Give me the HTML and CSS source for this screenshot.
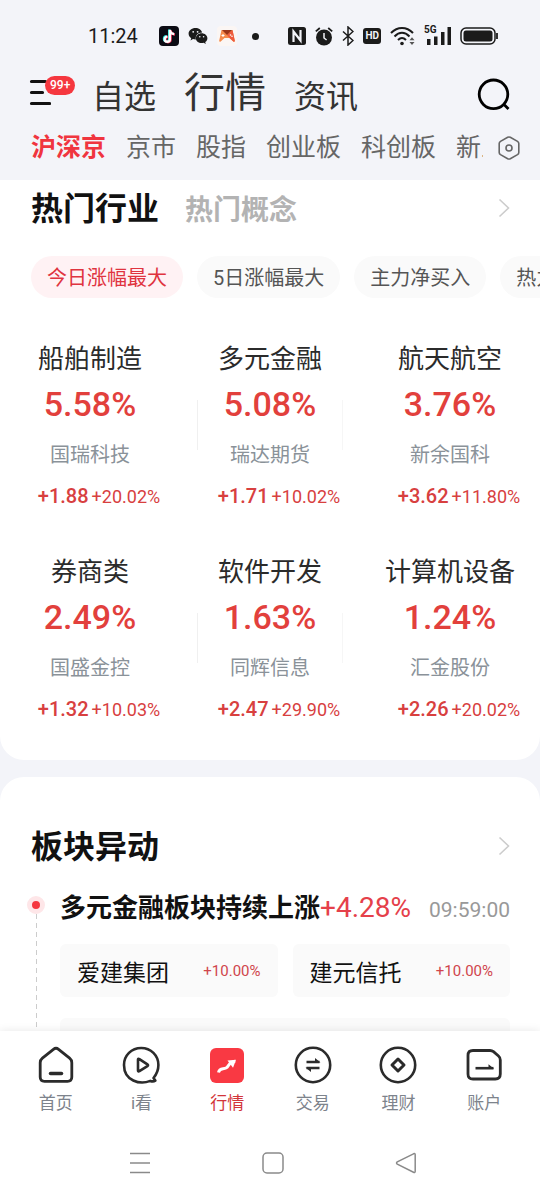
FILE: index.html
```html
<!DOCTYPE html>
<html lang="zh-CN">
<head>
    <meta charset="UTF-8">
    <meta name="viewport" content="width=device-width, initial-scale=1.0">
    <title>行情</title>
    <link rel="stylesheet" href="styles.css">
</head>
<body>
    <div class="status-bar">
        <span class="clock">11:24</span>
        <div class="status-apps">
            <svg width="20" height="20" viewBox="0 0 20 20">
                <rect width="20" height="20" rx="4" fill="#0b0b14"/>
                <g fill="none" stroke-width="2.4">
                    <path d="M10.2 3.4v9.4a2.6 2.6 0 1 1-2.6-2.6M10.2 4c.4 2.200 2 3.600 4.300 3.700" stroke="#25e5e0"/>
                    <path d="M11.600 4.200v9.400a2.600 2.600 0 1 1-2.600-2.600M11.600 4.800c.4 2.200 2 3.600 4.300 3.700" stroke="#fb2c55"/>
                    <path d="M10.900 3.800v9.400a2.600 2.600 0 1 1-2.600-2.600M10.900 4.400c.4 2.200 2 3.600 4.300 3.700" stroke="#fff"/>
                </g>
            </svg>
            <svg width="20" height="18" viewBox="0 0 20 18">
                <path d="M7.500 1C3.600 1 .6 3.500.6 6.700c0 1.900 1 3.400 2.600 4.500l-.7 2.200 2.500-1.300c.8.2 1.600.3 2.500.3h.4c-.9-3.700 2-6.900 6.200-6.900C13.500 2.900 10.800 1 7.500 1z" fill="#1b1b1b"/>
                <path d="M13.600 6.300c-3.300 0-5.700 2.200-5.700 4.900s2.400 4.900 5.700 4.900c.7 0 1.400-.1 2-.3l2.200 1.200-.6-1.900c1.300-.9 2.200-2.300 2.200-3.900 0-2.700-2.600-4.900-5.800-4.900z" fill="#1b1b1b"/>
                <g fill="#f3f4f9"><circle cx="5.200" cy="4.800" r=".9"/><circle cx="9.600" cy="4.800" r=".9"/><circle cx="11.800" cy="9.800" r=".8"/><circle cx="15.600" cy="9.800" r=".8"/></g>
            </svg>
            <svg width="20" height="20" viewBox="0 0 20 20">
                <rect width="20" height="20" rx="4" fill="#fbf6f4"/>
                <path d="M4.500 4h11l2.300 10.800c.1.900-.8 1.200-1.500.6L12.500 12h-5l-3.800 3.400c-.7.6-1.600.3-1.500-.6z" fill="#f58a4b"/>
                <path d="M10 9l5.500-5 2.300 10.800c.1.900-.8 1.200-1.500.6L12.500 12z" fill="#ee5a3c"/>
                <path d="M5 4h10l-5 5z" fill="#9c3418"/>
                <path d="M4.500 9.500h3M6 8v3" stroke="#fff"/>
                <circle cx="13.500" cy="9" r=".8" fill="#fff"/><circle cx="15" cy="10.300" r=".8" fill="#fff"/>
            </svg>
            <span class="dot"></span>
        </div>
        <div class="status-system">
            <svg width="18" height="18" viewBox="0 0 18 18">
                <rect width="18" height="18" rx="2.500" fill="#1b1b1b"/>
                <path d="M5.500 15V4.500l7 9V3" fill="none" stroke="#f3f4f9" stroke-width="2.200"/>
            </svg>
            <svg width="18" height="19" viewBox="0 0 18 19">
                <circle cx="9" cy="10.500" r="8" fill="#1b1b1b"/>
                <path d="M.8 4.400L4.800 1M17.200 4.400L13.200 1" stroke="#1b1b1b" stroke-width="1.800"/>
                <path d="M9 6v5l2.600 2" fill="none" stroke="#f3f4f9" stroke-width="1.500"/>
            </svg>
            <svg width="12" height="20" viewBox="0 0 12 20">
                <path d="M1 5.500l10 9L6 19V1l5 4.500-10 9" fill="none" stroke="#1b1b1b" stroke-width="1.500"/>
            </svg>
            <span class="hd">HD</span>
            <svg width="25" height="20" viewBox="0 0 25 20">
                <g fill="none" stroke="#1b1b1b" stroke-width="2">
                    <path d="M1 7C7.500.2 16.500.2 23 7"/>
                    <path d="M4.500 10.500c4.800-5 10.200-5 15 0"/>
                    <path d="M8 14c2.800-2.800 5.200-2.800 8 0"/>
                </g>
                <circle cx="12" cy="17.500" r="1.800" fill="#1b1b1b"/>
                <path d="M19.500 14.200l2.500-3 2.500 3zM19.500 16l2.500 3 2.500-3z" fill="#555"/>
            </svg>
            <div class="signal">
                <span class="signal-label">5G</span>
                <svg width="27" height="20" viewBox="0 0 27 20">
                    <path d="M3 13h3.500v6H3zM10 10.500h3.500V19H10zM17 6h3.500v13H17zM23.500 1H27v18h-3.500z" fill="#1b1b1b"/>
                </svg>
            </div>
            <svg width="38" height="18" viewBox="0 0 38 18">
                <rect x="1" y="1" width="34" height="16" rx="5" fill="none" stroke="#1b1b1b" stroke-width="1.500"/>
                <rect x="3.500" y="3.500" width="29" height="11" rx="2.500" fill="#1b1b1b"/>
                <path d="M37 6v6" stroke="#1b1b1b" stroke-width="1.800"/>
            </svg>
        </div>
    </div>

    <header class="header">
        <button class="menu-button" aria-label="菜单">
            <svg width="22" height="28" viewBox="0 0 22 28">
                <path d="M2.500 2.500h14M2.500 13.500h11M2.500 24.500h18" stroke="#111" stroke-width="3.200" stroke-linecap="round"/>
            </svg>
            <span class="badge">99+</span>
        </button>
        <nav class="main-tabs">
            <a href="#">自选</a>
            <a href="#" class="active">行情</a>
            <a href="#">资讯</a>
        </nav>
        <button class="search-button" aria-label="搜索">
            <svg width="34" height="34" viewBox="0 0 34 34">
                <path d="M16.500 2a14.300 14.300 0 1 0 0 28.600 14.300 14.300 0 0 0 0-28.600zM26.500 26l5 5" fill="none" stroke="#000" stroke-width="2.800"/>
            </svg>
        </button>
    </header>

    <div class="market-bar">
        <nav class="market-tabs">
            <a href="#" class="active">沪深京</a>
            <a href="#">京市</a>
            <a href="#">股指</a>
            <a href="#">创业板</a>
            <a href="#">科创板</a>
            <a href="#">新三板</a>
        </nav>
        <button class="settings-button" aria-label="设置">
            <svg width="24" height="26" viewBox="0 0 24 26">
                <path d="M10.700 2.300q1.300-.7 2.600 0l7.200 4.100q1.300.8 1.300 2.200v8.800q0 1.400-1.300 2.200l-7.200 4.100q-1.300.7-2.600 0l-7.200-4.100q-1.300-.8-1.300-2.200V8.600q0-1.400 1.300-2.200z" fill="none" stroke="#666" stroke-width="1.600"/>
                <circle cx="12" cy="13" r="3" fill="none" stroke="#666" stroke-width="1.600"/>
            </svg>
        </button>
    </div>

    <main class="content">
        <section class="card card-industry">
            <div class="card-head">
                <h2>热门行业</h2>
                <h2 class="muted">热门概念</h2>
                <a href="#" class="more" aria-label="更多">
                    <svg width="12" height="20" viewBox="0 0 12 20"><path d="M1.500 1.500l9 8.500-9 8.500" fill="none" stroke="#ccc" stroke-width="1.600"/></svg>
                </a>
            </div>
            <div class="chips">
                <button class="chip active">今日涨幅最大</button>
                <button class="chip">5日涨幅最大</button>
                <button class="chip">主力净买入</button>
                <button class="chip">热力值</button>
            </div>
            <div class="industries">
                <a href="#" class="industry">
                    <span class="name">船舶制造</span>
                    <span class="percent">5.58%</span>
                    <span class="stock">国瑞科技</span>
                    <span class="change">+1.88 <small>+20.02%</small></span>
                </a>
                <a href="#" class="industry divided">
                    <span class="name">多元金融</span>
                    <span class="percent">5.08%</span>
                    <span class="stock">瑞达期货</span>
                    <span class="change">+1.71 <small>+10.02%</small></span>
                </a>
                <a href="#" class="industry">
                    <span class="name">航天航空</span>
                    <span class="percent">3.76%</span>
                    <span class="stock">新余国科</span>
                    <span class="change">+3.62 <small>+11.80%</small></span>
                </a>
                <a href="#" class="industry">
                    <span class="name">券商类</span>
                    <span class="percent">2.49%</span>
                    <span class="stock">国盛金控</span>
                    <span class="change">+1.32 <small>+10.03%</small></span>
                </a>
                <a href="#" class="industry divided">
                    <span class="name">软件开发</span>
                    <span class="percent">1.63%</span>
                    <span class="stock">同辉信息</span>
                    <span class="change">+2.47 <small>+29.90%</small></span>
                </a>
                <a href="#" class="industry">
                    <span class="name">计算机设备</span>
                    <span class="percent">1.24%</span>
                    <span class="stock">汇金股份</span>
                    <span class="change">+2.26 <small>+20.02%</small></span>
                </a>
            </div>
        </section>

        <section class="card card-moves">
            <div class="card-head">
                <h2>板块异动</h2>
                <a href="#" class="more" aria-label="更多">
                    <svg width="12" height="20" viewBox="0 0 12 20"><path d="M1.500 1.500l9 8.500-9 8.500" fill="none" stroke="#ccc" stroke-width="1.600"/></svg>
                </a>
            </div>
            <div class="move">
                <div class="timeline">
                    <span class="timeline-dot"></span>
                    <span class="timeline-line"></span>
                </div>
                <div class="move-body">
                    <div class="move-head">
                        <h3>多元金融板块持续上涨</h3>
                        <span class="move-percent">+4.28%</span>
                        <time>09:59:00</time>
                    </div>
                    <div class="stocks">
                        <a href="#" class="stock-box">爱建集团 <small>+10.00%</small></a>
                        <a href="#" class="stock-box">建元信托 <small>+10.00%</small></a>
                        <div class="stock-box wide"></div>
                    </div>
                </div>
            </div>
        </section>
    </main>

    <nav class="tab-bar">
        <a href="#">
            <svg width="40" height="40" viewBox="0 0 40 40">
                <path d="M17.400 4.300q2.600-2 5.200 0l11 8.900q2.200 1.800 2.200 4.600V32q0 4.300-4.300 4.300h-23Q4.200 36.300 4.200 32V17.800q0-2.800 2.200-4.600z" fill="none" stroke="#2b2b2b" stroke-width="2.800"/>
                <path d="M14.500 28.500h11" stroke="#2b2b2b" stroke-width="3.500" stroke-linecap="round"/>
            </svg>
            首页
        </a>
        <a href="#">
            <svg width="40" height="40" viewBox="0 0 40 40" fill="none" stroke="#2b2b2b" stroke-width="2.600" stroke-linejoin="round" stroke-linecap="round">
                <path d="M32.500 33l1.800 2.600q-2 1.300-5 .3C19 40 3 36 3 20 3 10.500 10.500 3 20.200 3S37.400 10.500 37.400 20c0 5-2 9.500-4.900 13z"/>
                <path d="M17 14.500v11q0 1.500 1.400.7l8-5q1.300-.9 0-1.800l-8-5.300q-1.400-.9-1.400.4z"/>
            </svg>
            i看
        </a>
        <a href="#" class="active">
            <svg width="40" height="40" viewBox="0 0 40 40">
                <rect x="3" y="3" width="34" height="35" rx="6" fill="#f93943"/>
                <path d="M11.500 27.500c1-5 4.500-3 7.500-4.500s2-4.500 6-5.500l3-1.500" fill="none" stroke="#fff" stroke-width="3"/>
                <path d="M20.500 15.500l8.500-.7-3 8z" fill="#fff"/>
            </svg>
            行情
        </a>
        <a href="#">
            <svg width="40" height="40" viewBox="0 0 40 40" fill="none" stroke="#2b2b2b" stroke-width="2.600">
                <circle cx="20" cy="20" r="17.200"/>
                <path d="M13.500 17h13M13.500 23h13"/>
                <path d="M22 13l5.500 4.500H22zM18 27l-5.500-4.500H18z" fill="#2b2b2b" stroke="none"/>
            </svg>
            交易
        </a>
        <a href="#">
            <svg width="40" height="40" viewBox="0 0 40 40" fill="none" stroke="#2b2b2b" stroke-width="2.600">
                <circle cx="20" cy="20" r="17.200"/>
                <path d="M20 14l6 6-6 6-6-6z" stroke-width="3" stroke-linejoin="round"/>
            </svg>
            理财
        </a>
        <a href="#">
            <svg width="40" height="40" viewBox="0 0 40 40" fill="none" stroke="#2b2b2b" stroke-width="2.800">
                <path d="M9 5.500h17q2 0 3.500 1.200l5 4.300q1.800 1.500 1.800 4V29q0 5-5 5H9q-5 0-5-5V10.500q0-5 5-5z"/>
                <path d="M11.500 23.200h18" stroke-width="2.600"/>
                <path d="M24.500 19.300l5.500 4.500h-5.500z" fill="#2b2b2b" stroke="none"/>
            </svg>
            账户
        </a>
    </nav>

    <div class="system-nav">
        <button aria-label="最近任务">
            <svg width="22" height="22" viewBox="0 0 22 22"><path d="M1 1.500h20M1 11h20M1 20.500h20" stroke="#8a8a8a" stroke-width="1.500"/></svg>
        </button>
        <button aria-label="主屏幕">
            <svg width="22" height="22" viewBox="0 0 22 22"><rect x="1" y="1" width="20" height="20" rx="4" fill="none" stroke="#8a8a8a" stroke-width="1.500"/></svg>
        </button>
        <button aria-label="返回">
            <svg width="22" height="22" viewBox="0 0 22 22"><path d="M18.500 1.800q1.700-.8 1.700 1v16.400q0 1.800-1.700 1L2.300 12.200q-1.500-1.200 0-2.400z" fill="none" stroke="#8a8a8a" stroke-width="1.500"/></svg>
        </button>
    </div>
</body>
</html>
```
FILE: styles.css
```css
* {
    box-sizing: border-box;
}
body {
    font-family: Roboto, "Noto Sans CJK SC", sans-serif;
    display: flex;
    flex-direction: column;
    height: 100vh;
    margin: 0;
    overflow: hidden;
    background: #f3f4f9;
    color: #2b2b2b;
}
a {
    color: inherit;
    text-decoration: none;
}
button {
    font-family: inherit;
    padding: 0;
    border: none;
    background: none;
    color: inherit;
}
svg {
    display: block;
    flex: none;
}
h2, h3 {
    margin: 0;
}

/* status bar */
.status-bar {
    display: flex;
    align-items: center;
    height: 72px;
    padding: 0 42px 0 88px;
    color: #1b1b1b;
}
.clock {
    font-size: 20px;
}
.status-apps {
    display: flex;
    align-items: center;
    gap: 9px;
    margin-left: 21px;
}
.dot {
    width: 7px;
    height: 7px;
    margin-left: 6px;
    border-radius: 50%;
    background: #1b1b1b;
}
.status-system {
    display: flex;
    align-items: center;
    gap: 9px;
    margin-left: auto;
}
.hd {
    padding: 0 2px;
    border-radius: 3px;
    background: #1b1b1b;
    color: #f3f4f9;
    font-size: 10px;
    font-weight: bold;
    line-height: 16px;
}
.signal {
    position: relative;
}
.signal-label {
    position: absolute;
    top: -2px;
    left: 0;
    font-size: 10px;
    font-weight: bold;
    line-height: 12px;
}

/* header */
.header {
    display: flex;
    align-items: center;
    height: 46px;
    padding: 0 29px;
}
.menu-button {
    position: relative;
    width: 46px;
    margin-bottom: 4px;
}
.badge {
    position: absolute;
    top: -3px;
    left: 16px;
    padding: 0 5px;
    border-radius: 10px;
    background: #f5373f;
    color: white;
    font-size: 12px;
    font-weight: 500;
    line-height: 19px;
}
.main-tabs {
    display: flex;
    align-items: center;
    gap: 28px;
    flex: 1;
    margin-left: 17px;
    font-size: 32px;
    line-height: 44px;
    color: #333;
}
.main-tabs a {
    padding-top: 4px;
}
.main-tabs .active {
    padding: 0 0 4px;
    font-size: 41px;
}

/* market tabs */
.market-bar {
    display: flex;
    align-items: center;
    height: 62px;
    padding: 0 19px 2px 31px;
}
.market-tabs {
    display: flex;
    gap: 20px;
    flex: 1;
    margin-right: 14px;
    overflow: hidden;
    white-space: nowrap;
    font-size: 25px;
    line-height: 36px;
    color: #666;
}
.market-tabs a {
    flex: none;
}
.market-tabs .active {
    color: #f0353f;
    font-weight: bold;
}

/* cards */
.content {
    flex: 1;
    min-height: 0;
    overflow: hidden;
}
.card {
    background: white;
}
.card-industry {
    padding-bottom: 36px;
    border-radius: 0 0 24px 24px;
}
.card-moves {
    margin-top: 17px;
    padding-top: 41px;
    border-radius: 24px 24px 0 0;
}
.card-head {
    display: flex;
    align-items: baseline;
    height: 58px;
    padding: 5px 30px 0 31px;
}
h2 {
    font-size: 32px;
    line-height: 48px;
    color: #111;
}
h2.muted {
    margin-left: 26px;
    font-size: 28px;
    color: #b3b3b3;
}
.more {
    align-self: center;
    margin: 0 0 8px auto;
}

.chips {
    display: flex;
    gap: 14px;
    margin: 18px 0 40px 31px;
    overflow: hidden;
    white-space: nowrap;
}
.chip {
    flex: none;
    padding: 2px 16px 0;
    border-radius: 21px;
    background: #fafafa;
    color: #555;
    font-size: 20px;
    line-height: 40px;
}
.chip.active {
    background: #fff2f4;
    color: #e0343f;
}

.industries {
    display: grid;
    grid-template-columns: repeat(3, 1fr);
    row-gap: 40px;
}
.industry {
    display: flex;
    flex-direction: column;
    align-items: center;
    white-space: nowrap;
}
.divided {
    background:
        linear-gradient(#f0f0f0, #f0f0f0) 17px 62px / 1px 50px no-repeat,
        linear-gradient(#f6f6f6, #f6f6f6) calc(100% - 17px) 62px / 1px 50px no-repeat;
}
.name {
    font-size: 26px;
    line-height: 42px;
}
.percent {
    color: #e2403c;
    font-size: 34px;
    font-weight: 500;
    line-height: 48px;
}
.stock {
    color: #8a9299;
    font-size: 20px;
    line-height: 54px;
}
.change {
    display: flex;
    align-items: baseline;
    gap: 3px;
    padding-left: 18px;
    color: #d8403f;
    font-size: 20px;
    font-weight: 500;
    line-height: 28px;
}
.change small {
    font-size: 18px;
    font-weight: 400;
}

/* sector moves */
.move {
    display: flex;
    padding-right: 30px;
}
.timeline {
    display: flex;
    flex-direction: column;
    align-items: center;
    width: 60px;
    padding: 20px 0 0 12px;
}
.timeline-dot {
    width: 18px;
    height: 18px;
    border: 5px solid #fee6e8;
    border-radius: 50%;
    background: #f5373f;
}
.timeline-line {
    flex: 1;
    width: 1px;
    background: repeating-linear-gradient(#ccc 0 5px, white 5px 9px);
}
.move-body {
    flex: 1;
}
.move-head {
    display: flex;
    align-items: baseline;
    padding-top: 10px;
    white-space: nowrap;
}
h3 {
    font-size: 26px;
    line-height: 44px;
    color: #111;
}
.move-percent {
    color: #e5404a;
    font-size: 28px;
}
time {
    margin-left: auto;
    color: #999;
    font-size: 21px;
}
.stocks {
    display: grid;
    grid-template-columns: 1fr 1fr;
    gap: 21px 15px;
    margin-top: 14px;
}
.stock-box {
    display: flex;
    align-items: center;
    justify-content: space-between;
    height: 53px;
    padding: 0 17px;
    border-radius: 6px;
    background: #fafafa;
    color: #111;
    font-size: 23px;
}
.stock-box small {
    color: #d0454c;
    font-size: 15px;
}
.stock-box.wide {
    grid-column: span 2;
}

/* bottom bars */
.tab-bar {
    display: grid;
    grid-template-columns: repeat(6, 1fr);
    height: 94px;
    padding: 14px 13px 0;
    background: white;
    box-shadow: 0 -1px 8px rgba(0, 0, 0, 0.08);
}
.tab-bar a {
    display: flex;
    flex-direction: column;
    align-items: center;
    gap: 5px;
    color: #7d838c;
    font-size: 17px;
    line-height: 26px;
}
.tab-bar .active {
    color: #d2353a;
}
.system-nav {
    display: grid;
    grid-template-columns: repeat(3, 1fr);
    justify-items: center;
    align-items: center;
    height: 75px;
    padding: 0 67px 0 73px;
    background: white;
}
```
